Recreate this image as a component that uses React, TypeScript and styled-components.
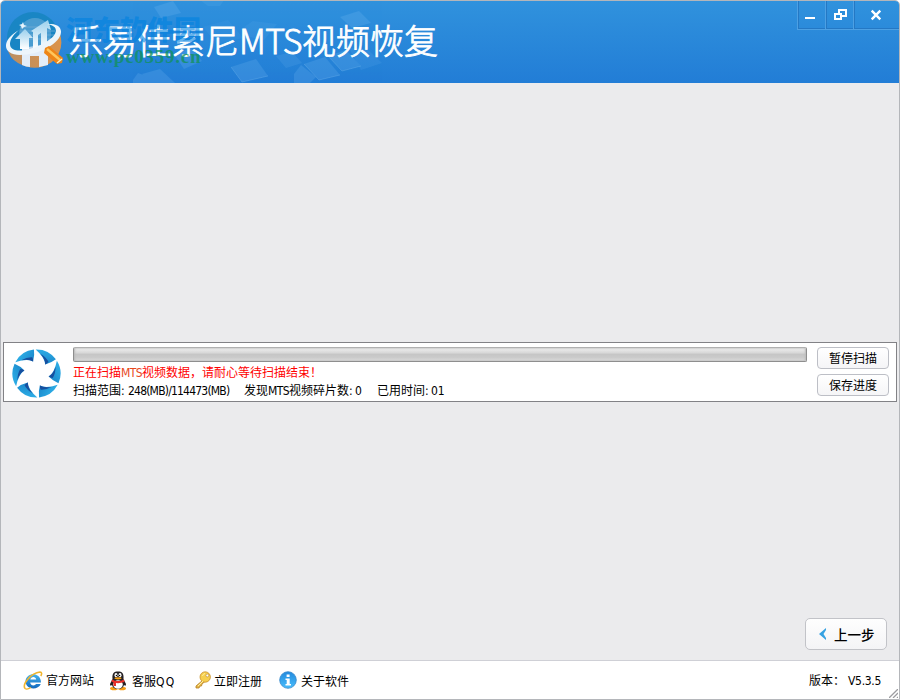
import React from 'react';
import styled, { createGlobalStyle } from 'styled-components';

const Global = createGlobalStyle`
  * { box-sizing: border-box; }
  body { margin: 0; background: #fff; overflow: hidden; }
  button { font: inherit; color: inherit; padding: 0; margin: 0; }
`;

const Window = styled.div`
  width: 900px;
  height: 700px;
  display: flex;
  flex-direction: column;
  border: 1px solid #b4b6ba;
  border-radius: 5px 5px 0 0;
  overflow: hidden;
  background: #ebebed;
  font: 12px/16px "DejaVu Sans Condensed", "Noto Sans CJK SC", sans-serif;
  color: #000;
`;

const Header = styled.header`
  position: relative;
  flex: none;
  height: 82px;
  display: flex;
  justify-content: space-between;
  background: linear-gradient(#3092dd, #227dd6);
`;

const Tiles = styled.svg`
  position: absolute;
  left: -1px;
  top: -1px;
`;

const Brand = styled.div`
  position: relative;
  display: flex;
  padding: 10px 0 0 4px;
`;

const Title = styled.h1`
  margin: 4px 0 0 4px;
  height: 50px;
  display: flex;
  font: 300 34px/50px "Noto Sans CJK SC", sans-serif;
  color: #fff;
  -webkit-text-stroke: 0.8px #fff;
  white-space: nowrap;
`;

const TitlePart = styled.span<{ $width: number; $spacing: number }>`
  width: ${p => p.$width}px;
  letter-spacing: ${p => p.$spacing}px;
`;

const Watermark = styled.div`
  position: absolute;
  left: 65px;
  top: 11px;
  white-space: nowrap;
`;

const WatermarkName = styled.div`
  font: 900 27px/34px "Noto Sans CJK SC", sans-serif;
  color: rgba(0, 130, 225, 0.62);
`;

const WatermarkUrl = styled.div`
  font: bold 19px/22px "Liberation Serif", serif;
  letter-spacing: 0.75px;
  color: rgba(16, 145, 88, 0.75);
`;

const Controls = styled.div`
  position: relative;
  display: flex;
  height: 29px;
  border-bottom: 1px solid #4da0e3;
`;

const Control = styled.button<{ $width: number }>`
  width: ${p => p.$width}px;
  border: 0;
  border-left: 1px solid #4da0e3;
  box-shadow: inset 1px 0 #2478c4, inset 0 -1px #2478c4;
  background: transparent;
  display: flex;
  svg { display: block; }
`;

const Content = styled.main`
  flex: 1;
  display: flex;
  flex-direction: column;
  padding: 259px 2px 0;
`;

const ScanPanel = styled.section`
  height: 60px;
  display: flex;
  border: 1px solid #828286;
  background: #fff;
  padding: 4px 7px 0 8px;
`;

const ScanInfo = styled.div`
  width: 734px;
  margin-left: 12px;
`;

const Progress = styled.div`
  height: 15px;
  border: 1px solid #8e8e8e;
  border-top-color: #b0b0b0;
  border-radius: 2px;
  background: linear-gradient(#f0f0f0 0, #d9d9d9 35%, #c6c6c6 50%, #cbcbcb 75%, #dedede);
  box-shadow: inset 1px 0 2px #bbb, inset -1px 0 2px #bbb;
`;

const Notice = styled.div`
  display: flex;
  height: 17px;
  margin-top: 3px;
  line-height: 17px;
  color: #f00;
  white-space: nowrap;
`;

const Stats = styled.div`
  display: flex;
  height: 18px;
  line-height: 18px;
  white-space: nowrap;
`;

const Run = styled.span<{ $width: number; $spacing?: number; $ink?: string }>`
  flex: none;
  width: ${p => p.$width}px;
  letter-spacing: ${p => p.$spacing ?? 0}px;
  color: ${p => p.$ink ?? 'inherit'};
`;

const Actions = styled.div`
  margin-left: 10px;
  display: flex;
  flex-direction: column;
  gap: 5px;
`;

const ActionButton = styled.button`
  width: 72px;
  height: 22px;
  border: 1px solid #bdbfc6;
  border-radius: 4px;
  background: linear-gradient(#fff, #f5f5f7);
  line-height: 20px;
  padding-top: 1px;
`;

const BackButton = styled.button`
  align-self: flex-end;
  margin: auto 10px 10px 0;
  width: 82px;
  height: 32px;
  display: flex;
  align-items: center;
  gap: 7px;
  padding: 0 0 1px 13px;
  border: 1px solid #c2c3c8;
  border-radius: 5px;
  background: linear-gradient(#fefefe, #f4f4f6);
  font: 500 13.5px/20px "Noto Sans CJK SC", sans-serif;
`;

const Footer = styled.footer`
  position: relative;
  flex: none;
  height: 39px;
  display: flex;
  border-top: 1px solid #cfd0d6;
  background: #fff;
  padding: 9px 17px 0 22px;
`;

const FooterLink = styled.a<{ $width: number; $gap: number; $drop: number }>`
  width: ${p => p.$width}px;
  height: 20px;
  display: flex;
  gap: ${p => p.$gap}px;
  white-space: nowrap;
  svg { flex: none; margin-top: 1px; }
  span { line-height: 20px; padding-top: ${p => p.$drop}px; }
`;

const Version = styled.div`
  margin-left: auto;
  display: flex;
  line-height: 22px;
`;

const Grip = styled.svg`
  position: absolute;
  right: 1px;
  bottom: 1px;
`;

function HeaderTiles() {
  return (
    <Tiles width="460" height="83" viewBox="0 0 460 83" fill="#8cc8f5">
      <g opacity=".17">
        <path d="M154 7 173 1 181 13 161 18Z" />
        <path d="M200 0 224 0 220 6 208 6Z" opacity=".6" />
        <path d="M133 80 138 73 162 82 160 83 133 83Z" />
        <path d="M142 74 160 69 175 83 151 83Z" />
        <path d="M174 54 191 48 202 61 184 69Z" />
        <path d="M203 27 228 20 243 38 217 44Z" opacity=".35" />
        <path d="M241 29 253 21 277 24 264 40 246 36Z" opacity=".5" />
        <path d="M231 67 256 59 268 76 242 82Z" />
        <path d="M340 17 359 11 371 23 352 28Z" />
        <path d="M294 74 301 65 316 77 310 83 294 83Z" />
        <path d="M304 64 325 57 340 75 319 80Z" />
        <path d="M328 56 346 50 361 66 342 71Z" />
        <path d="M276 56 292 52 302 63 286 68Z" opacity=".7" />
        <path d="M349 48 361 70 382 63 367 49Z" opacity=".6" />
      </g>
      <path d="M231 67 242 82 268 76M304 64 319 80 340 75M328 56 342 71 361 66" fill="none" stroke="#8cc8f5" opacity=".25" />
    </Tiles>
  );
}

function Logo() {
  return (
    <svg width="60" height="60" viewBox="5 10 60 60">
      <defs>
        <linearGradient id="lo" x2="1" y2="0"><stop stopColor="#b98e63" /><stop offset="1" stopColor="#dc934b" /></linearGradient>
        <linearGradient id="lw" x2="0" y2="1"><stop stopColor="#9bd0ed" /><stop offset="1" stopColor="#fff" /></linearGradient>
      </defs>
      <circle cx="33" cy="37" r="26" fill="#1685bf" opacity=".85" />
      <path d="M7 46Q24 56 45 45L60 33Q65 49 52 61Q36 72 18 62Q9 57 7 46Z" fill="url(#lo)" />
      <path d="M22 47V64Q26 66 30 66V55H39V66L48 64V43Z" fill="#e3edf8" />
      <circle cx="35" cy="33" r="16" fill="#86b8df" opacity=".45" />
      <path d="M20 26H43M20 30H55M20 34H55M20 38H54" stroke="#75acd5" strokeWidth="1.500" opacity=".5" />
      <path d="M15 38 25 28 33 37H29V48H20V38Z" fill="url(#lw)" />
      <path d="M31 30 48 19 51 29 47 27V44L41 47V32L38 34V48H33V31Z" fill="url(#lw)" />
      <path d="M19 29C0 40 3 54 20 54C39 54 62 42 61 30C60 23 53 23 47 23C60 25 58 34 46 41C29 51 10 53 10 43C10 38 14 33 19 29Z" fill="#edf5fb" />
      <path d="M23 21 24 24 27 25 24 26 22 28 21 25 19 24 22 23Z" fill="#e6f3fc" />
      <path d="M45 47 49 45 63 57 62 62 57 63 44 52Z" fill="#ee8517" />
      <path d="M47 48 60 59" stroke="#ffc65b" strokeWidth="2.400" />
      <path d="M57 62 62 58" stroke="#fff0bd" strokeWidth="1.500" />
    </svg>
  );
}

function Swirl() {
  return (
    <svg width="49" height="52" viewBox="-24.5 -26.5 49 52">
      <defs><linearGradient id="sw" x2="1" y2="1"><stop stopColor="#30b4ea" /><stop offset="1" stopColor="#1780c6" /></linearGradient></defs>
      {[-32, 28, 88, 148, 208, 268].map(a => (
        <g key={a} transform={`rotate(${a})`}>
          <path d="M-12-20.800A24 24 0 0 1 10.500-21.600Q8-16 3.500-12Q0-18-12-20.800Z" fill="url(#sw)" />
          <path d="M3.500-12Q1-17-6-19.300Q1-19 5-16Q5-14 3.500-12Z" fill="#174f9f" />
        </g>
      ))}
    </svg>
  );
}

function Browser() {
  return (
    <svg width="20" height="20" viewBox="0 0 20 20">
      <defs><linearGradient id="ie" x2="0" y2="1"><stop stopColor="#46b5ee" /><stop offset="1" stopColor="#1268bd" /></linearGradient></defs>
      <path d="M18 11.500H7.200C7.500 15 12 15.200 13 13H17.800C15 19.500 3 19 2.500 10.500C2.500 1 18 0 18 11.500ZM7.300 8.500H13.200C13 5 7.800 5 7.300 8.500Z" fill="url(#ie)" />
      <path d="M2 17.500C-1 13 8 2 17 1C19 1 19 3 17.800 5" fill="none" stroke="#f1b52e" strokeWidth="1.600" />
      <path d="M2 17.500Q4 19 8 16.500" fill="none" stroke="#f1b52e" strokeWidth="1.300" />
    </svg>
  );
}

function Penguin() {
  return (
    <svg width="18" height="20" viewBox="0 0 18 20">
      <ellipse cx="5" cy="17.500" rx="4" ry="1.800" fill="#f6a018" />
      <ellipse cx="13" cy="17.500" rx="4" ry="1.800" fill="#f6a018" />
      <path d="M3.500 8C3 2 5 .5 9 .5S15 2 14.500 8L17 13Q17 16 15 14Q14 18 9 18T3 14Q1 16 1 13Z" fill="#242024" />
      <ellipse cx="9" cy="13.500" rx="4.800" ry="4.300" fill="#fff" />
      <ellipse cx="7" cy="4.200" rx="1.500" ry="2.100" fill="#fff" />
      <ellipse cx="11" cy="4.200" rx="1.500" ry="2.100" fill="#fff" />
      <circle cx="7.400" cy="4.500" r=".7" /><circle cx="10.600" cy="4.500" r=".7" />
      <ellipse cx="9" cy="7.300" rx="3.500" ry="1.100" fill="#f6a018" />
      <path d="M3 8.500Q9 11.500 15 8.500L15.500 11Q11 12.500 7 12V15H4.500V11.400L2.500 10.500Z" fill="#e8302a" />
    </svg>
  );
}

function Key() {
  return (
    <svg width="17" height="18" viewBox="0 0 17 18">
      <path d="M8 9 1 15V17H4L5 15H6.500L7 13 10 10.500" fill="#e7b94a" stroke="#b57d24" strokeWidth=".8" />
      <circle cx="10.200" cy="6" r="5.200" fill="#f6cf4f" stroke="#ca912e" strokeWidth=".8" />
      <circle cx="12.300" cy="4.500" r="1.400" fill="#fff" stroke="#b4812d" strokeWidth=".6" />
      <path d="M7.500 5Q8 3 10 2.500M8 10 3 15" stroke="#fff0a0" fill="none" />
    </svg>
  );
}

function Info() {
  return (
    <svg width="18" height="18" viewBox="0 0 18 18">
      <defs><linearGradient id="inf" x2="0" y2="1"><stop stopColor="#238ade" /><stop offset="1" stopColor="#48bdfb" /></linearGradient></defs>
      <circle cx="9" cy="9" r="8.300" fill="url(#inf)" stroke="#3688cc" strokeWidth=".8" />
      <path d="M7.600 3.500H10.600V6H7.600ZM6.500 7.500H10.700V13H12V14.500H6.500V13H7.700V9H6.500Z" fill="#fff" />
    </svg>
  );
}

export default function App() {
  return (
    <>
      <Global />
      <Window>
        <Header>
          <HeaderTiles />
          <Brand>
            <Logo />
            <Title>
              <TitlePart $width={170} $spacing={0}>乐易佳索尼</TitlePart>
              <TitlePart $width={63} $spacing={-0.6}>MTS</TitlePart>
              <TitlePart $width={137} $spacing={0}>视频恢复</TitlePart>
            </Title>
            <Watermark>
              <WatermarkName>河东软件园</WatermarkName>
              <WatermarkUrl>www.pc0359.cn</WatermarkUrl>
            </Watermark>
          </Brand>
          <Controls>
            <Control $width={28} aria-label="最小化">
              <svg width="26" height="27"><path d="M7 16H17V18H7Z" fill="#fff" /></svg>
            </Control>
            <Control $width={28} aria-label="还原">
              <svg width="26" height="27"><path d="M13 13V9H20V15H15M9 13H15V18H9Z" stroke="#fff" strokeWidth="2" fill="none" /></svg>
            </Control>
            <Control $width={46} aria-label="关闭">
              <svg width="44" height="27"><path d="M17.700 9.700 26.300 18.300M26.300 9.700 17.700 18.300" stroke="#fff" strokeWidth="2.400" /></svg>
            </Control>
          </Controls>
        </Header>
        <Content>
          <ScanPanel>
            <Swirl />
            <ScanInfo>
              <Progress />
              <Notice>
                <Run $width={48}>正在扫描</Run>
                <Run $width={21} $spacing={-0.6} $ink="#e8471c">MTS</Run>
                <Run $width={190}>视频数据，请耐心等待扫描结束！</Run>
              </Notice>
              <Stats>
                <Run $width={55}>扫描范围:</Run>
                <Run $width={116} $spacing={-0.8}>248(MB)/114473(MB)</Run>
                <Run $width={24}>发现</Run>
                <Run $width={21} $spacing={-0.6}>MTS</Run>
                <Run $width={66}>视频碎片数:</Run>
                <Run $width={22}>0</Run>
                <Run $width={54}>已用时间:</Run>
                <Run $width={20}>01</Run>
              </Stats>
            </ScanInfo>
            <Actions>
              <ActionButton>暂停扫描</ActionButton>
              <ActionButton>保存进度</ActionButton>
            </Actions>
          </ScanPanel>
          <BackButton>
            <svg width="8" height="12"><path d="M7 0V2L4.500 6 7 10V12L0 6Z" fill="#36a2e2" /></svg>
            上一步
          </BackButton>
        </Content>
        <Footer>
          <FooterLink $width={86} $gap={3} $drop={1}><Browser /><span>官方网站</span></FooterLink>
          <FooterLink $width={86} $gap={5} $drop={2}><Penguin /><span>客服<Run $width={24} $spacing={1.3}>QQ</Run></span></FooterLink>
          <FooterLink $width={84} $gap={2} $drop={2}><Key /><span>立即注册</span></FooterLink>
          <FooterLink $width={90} $gap={4} $drop={2}><Info /><span>关于软件</span></FooterLink>
          <Version>
            <Run $width={39}>版本：</Run>
            <Run $width={34} $spacing={-0.3}>V5.3.5</Run>
          </Version>
          <Grip width="9" height="9"><path d="M0 9 9 0M4 9 9 4M8 9 9 8" stroke="#9c9ca0" strokeWidth="1.300" /></Grip>
        </Footer>
      </Window>
    </>
  );
}
